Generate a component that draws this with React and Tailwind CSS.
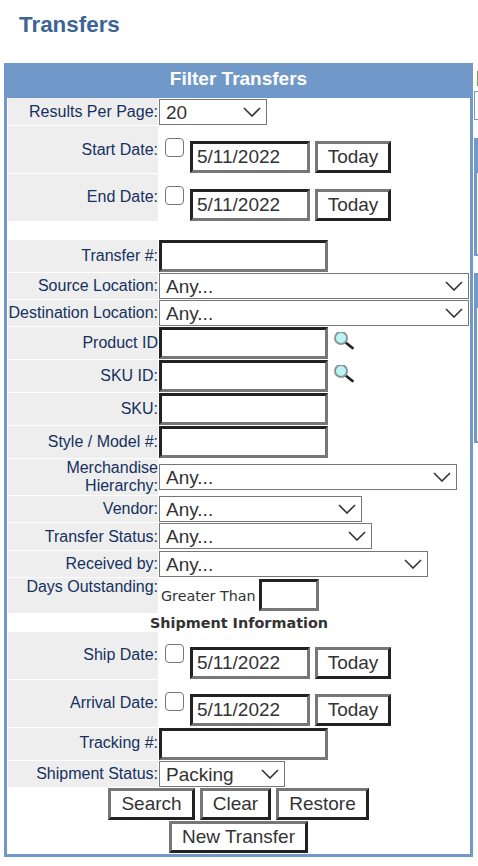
import React from "react";

const arial = "font-['Liberation_Sans',Arial,sans-serif]";
const verdana = "font-['DejaVu_Sans',Verdana,sans-serif]";

const Label = ({ children, className = "" }) => (
    <div className={`w-[150px] shrink-0 bg-[#eeeeee] text-right text-[16px] leading-[18px] text-[#15315f] ${className}`}>
        {children}
    </div>
);

const TextBox = ({ className = "w-[169px] h-[32px]", value = "" }) => (
    <input
        type="text"
        readOnly
        value={value}
        className={`block border-[3px] border-t-[#222222] border-l-[#222222] border-r-[#777777] border-b-[#777777] bg-white pl-[4px] text-[19px] text-[#333333] outline-none ${className}`}
    />
);

const Btn = ({ children, className = "" }) => (
    <button
        type="button"
        className={`block h-[32px] border-[3px] border-t-[#777777] border-l-[#777777] border-r-[#222222] border-b-[#222222] bg-white p-0 pb-[2px] text-[19px] leading-none text-[#333333] ${className}`}
    >
        {children}
    </button>
);

const Select = ({ value, className }) => (
    <div className={`relative h-[26px] ${className}`}>
        <select
            value={value}
            onChange={() => {}}
            className="block h-full w-full appearance-none rounded-none border border-[#777777] bg-white pb-0 pl-[6px] pt-[1px] text-[19px] leading-[22px] text-[#333333] outline-none"
        >
            <option>{value}</option>
        </select>
        <svg viewBox="0 0 18 10" className="pointer-events-none absolute right-[6px] top-[8px] h-[10px] w-[18px]" fill="none" stroke="#333333" strokeWidth="1.6">
            <path d="M1 1 L9 9 L17 1" />
        </svg>
    </div>
);

const Magnifier = () => (
    <svg viewBox="0 0 20 18" className="ml-[6px] h-[18px] w-[20px] self-start">
        <path d="M11 10 L18.5 16" stroke="#222222" strokeWidth="2.8" strokeLinecap="round" />
        <circle cx="7" cy="6" r="6" fill="#b8f5f5" stroke="#8d9696" strokeWidth="2" />
    </svg>
);

const DateRow = ({ label, labelTop = "pt-[14px]", boxTop = "pt-[15px]" }) => (
    <div className="mb-px flex h-[47px]">
        <Label className={labelTop}>{label}:</Label>
        <div className={`relative flex-1 pl-[32px] ${boxTop}`}>
            <input
                type="checkbox"
                readOnly
                className="absolute left-[7px] top-[12px] h-[19px] w-[19px] appearance-none rounded-[4px] border border-[#777777] bg-white"
            />
            <div className="flex gap-[5px]">
                <TextBox className="h-[32px] w-[120px]" value="5/11/2022" />
                <Btn className="w-[76px]">Today</Btn>
            </div>
        </div>
    </div>
);

const InputRow = ({ label, search, labelClass = "" }) => (
    <div className="mb-px flex h-[32px]">
        <Label className={`flex items-center justify-end ${labelClass}`}>{label}</Label>
        <div className="ml-px flex pt-[5px] [&>input]:-mt-[5px]">
            <TextBox />
            {search && <Magnifier />}
        </div>
    </div>
);

const SelectRow = ({ label, width, value = "Any...", rowHeight = "h-[26px]" }) => (
    <div className={`mb-px flex ${rowHeight}`}>
        <Label className="flex items-center justify-end">{label}</Label>
        <Select value={value} className={`ml-px ${width}`} />
    </div>
);

export default function App() {
    return (
        <div className={`${arial} h-[866px] w-[478px] overflow-hidden bg-white`}>
            <h1 className="h-[63px] pl-[19px] pt-[10px] text-[22.4px] font-bold leading-[30px] text-[#3c6496]">
                Transfers
            </h1>

            <div className="flex">
                {/* FILTER PANEL */}
                <div className="ml-[4px] h-[794px] w-[469px] shrink-0 border-x-[3px] border-b-[3px] border-[#7098c8]">
                    <div className="-mx-[3px] h-[35px] bg-[#7098c8] text-center text-[19px] font-bold leading-[31px] text-white">
                        Filter Transfers
                    </div>

                    <div className="pl-px">
                        <div className="mb-px flex h-[27px]">
                            <Label className="flex items-center justify-end">Results Per Page:</Label>
                            <Select value="20" className="ml-px mt-px w-[108px]" />
                        </div>
                        <DateRow label="Start Date" labelTop="pt-[15px]" />
                        <DateRow label="End Date" />
                        <div className="h-[18px]" />

                        <InputRow label="Transfer #:" />
                        <SelectRow label="Source Location:" width="w-[310px]" />
                        <SelectRow label="Destination Location:" width="w-[310px]" />
                        <InputRow label="Product ID" search />
                        <InputRow label="SKU ID:" search />
                        <InputRow label="SKU:" />
                        <InputRow label="Style / Model #:" />

                        <div className="mb-px flex h-[36px]">
                            <Label>
                                Merchandise
                                <br />
                                Hierarchy:
                            </Label>
                            <Select value="Any..." className="ml-px mt-[5px] w-[298px]" />
                        </div>
                        <SelectRow label="Vendor:" width="w-[203px]" />
                        <SelectRow label="Transfer Status:" width="w-[213px]" rowHeight="h-[27px]" />
                        <SelectRow label="Received by:" width="w-[269px]" />

                        <div className="flex h-[35px]">
                            <Label>Days Outstanding:</Label>
                            <div className="ml-[3px] flex items-center gap-[3px] pb-px">
                                <span className={`${verdana} mt-[4px] text-[14.3px] text-[#333333]`}>Greater Than</span>
                                <TextBox className="h-[32px] w-[60px]" />
                            </div>
                        </div>

                        <div className={`${verdana} h-[19px] text-center text-[14.4px] font-bold leading-[20px] text-[#333333]`}>
                            Shipment Information
                        </div>

                        <DateRow label="Ship Date" />
                        <DateRow label="Arrival Date" boxTop="pt-[14px]" />
                        <InputRow label="Tracking #:" labelClass="pb-[2px]" />
                        <SelectRow label="Shipment Status:" width="w-[126px]" value="Packing" />

                        <div className="mt-px flex justify-center gap-[5px] pr-[1px]">
                            <Btn className="w-[87px]">Search</Btn>
                            <Btn className="w-[71px]">Clear</Btn>
                            <Btn className="w-[93px]">Restore</Btn>
                        </div>
                        <div className="mt-[1px] flex justify-center pr-[1px]">
                            <Btn className="w-[139px]">New Transfer</Btn>
                        </div>
                    </div>
                </div>

                {/* NEXT COLUMN, CUT OFF BY THE WINDOW */}
                <div className="ml-px w-[100px] shrink-0">
                    <div className="ml-[3px] mt-[8px] h-[15px] w-[1px] bg-[#6aa84f]" />
                    <div className="mt-[5px] h-[29px] border border-[#7098c8]" />
                    <div className="mt-[18px] h-[118px] border-b-[2px] border-l-[3px] border-[#7098c8]">
                        <div className="h-[35px] bg-[#7098c8]" />
                    </div>
                    <div className="mt-[17px] h-[170px] border-b-[2px] border-l-[3px] border-[#7098c8]">
                        <div className="h-[35px] bg-[#7098c8]" />
                    </div>
                </div>
            </div>
        </div>
    );
}
